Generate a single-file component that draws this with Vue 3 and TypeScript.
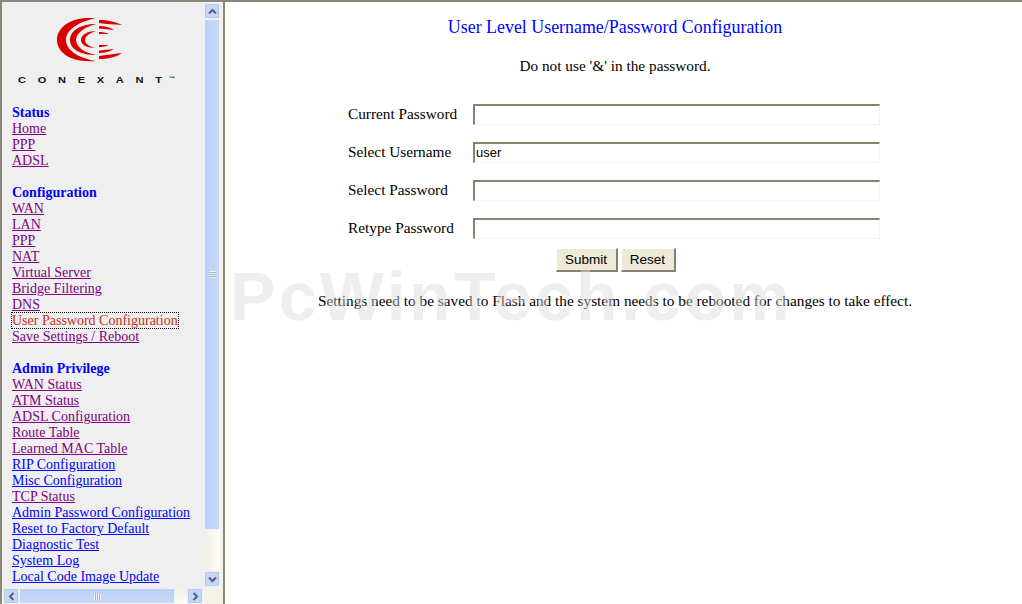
<script setup lang="ts">
// Router admin page: frameset look, nav frame on the left, form frame on the right.
interface NavLink { label: string; visited?: boolean; focus?: boolean }
interface NavGroup { title: string; links: NavLink[] }

const v = (label: string): NavLink => ({ label, visited: true })
const groups: NavGroup[] = [
  { title: 'Status', links: [v('Home'), v('PPP'), v('ADSL')] },
  {
    title: 'Configuration',
    links: [
      v('WAN'), v('LAN'), v('PPP'), v('NAT'), v('Virtual Server'), v('Bridge Filtering'), v('DNS'),
      { label: 'User Password Configuration', visited: true, focus: true },
      v('Save Settings / Reboot'),
    ],
  },
  {
    title: 'Admin Privilege',
    links: [
      v('WAN Status'), v('ATM Status'), v('ADSL Configuration'), v('Route Table'), v('Learned MAC Table'),
      { label: 'RIP Configuration' }, { label: 'Misc Configuration' }, v('TCP Status'),
      { label: 'Admin Password Configuration' }, { label: 'Reset to Factory Default' },
      { label: 'Diagnostic Test' }, { label: 'System Log' }, { label: 'Local Code Image Update' },
    ],
  },
]
const fields = [
  { label: 'Current Password', value: '' },
  { label: 'Select Username', value: 'user' },
  { label: 'Select Password', value: '' },
  { label: 'Retype Password', value: '' },
]
</script>

<template>
  <div class="frames">
    <aside class="nav-frame">
      <div class="nav-view">
        <div class="logo">
          <svg width="68" height="46" viewBox="56 18 68 46">
            <g fill="#d90000">
              <path d="M96 18 C70 16 57 28 57 40 C57 52 70 63 96 61 C78 58 66 50 66 40 C66 30 78 22 96 18Z" />
              <path d="M96 24 C80 24 70 31 70 40 C70 49 80 55 96 55 C85 53 76 47 76 40 C76 33 85 27 96 24Z" />
              <path d="M96 31 C87 31 81 35 81 40 C81 45 87 48 96 48 C90 47 85 44 85 40 C85 36 90 33 96 31Z" />
              <path d="M99 20 C108 20 116 22 122 25 C114 24.500 106 24 99 23Z" />
              <path d="M99 26 C105 26 110 27.500 114 30 C109 29.500 104 29 99 28.500Z" />
              <path d="M99 32 C102 32 106 32.500 109 34 C106 34 102 34 99 34Z" />
              <path d="M99 59 C108 59 116 57 122 53 C114 54 106 55 99 56Z" />
              <path d="M99 53 C105 53 110 51.500 114 49 C109 49.500 104 50 99 50.500Z" />
              <path d="M99 47 C102 47 106 46.500 109 45 C106 45 102 45 99 45Z" />
            </g>
          </svg>
          <div class="wordmark">CONEXANT<sup>™</sup></div>
        </div>
        <section v-for="g in groups" :key="g.title" class="group">
          <div class="group-title">{{ g.title }}</div>
          <div v-for="l in g.links" :key="l.label">
            <a href="#" :class="{ visited: l.visited, focus: l.focus }" @click.prevent>{{ l.label }}</a>
          </div>
        </section>
      </div>
      <div class="vbar">
        <div class="sb-btn"><svg width="9" height="7" viewBox="0 0 9 7"><path d="M1 5.500 4.500 2 8 5.500" /></svg></div>
        <div class="vthumb"><span class="grip-v"></span></div>
        <div class="vtrack"></div>
        <div class="sb-btn"><svg width="9" height="7" viewBox="0 0 9 7"><path d="M1 1.500 4.500 5 8 1.500" /></svg></div>
      </div>
      <div class="hbar">
        <div class="sb-btn"><svg width="7" height="9" viewBox="0 0 7 9"><path d="M5.500 1 2 4.500 5.500 8" /></svg></div>
        <div class="hthumb"><span class="grip-h"></span></div>
        <div class="htrack"></div>
        <div class="sb-btn"><svg width="7" height="9" viewBox="0 0 7 9"><path d="M1.500 1 5 4.500 1.500 8" /></svg></div>
      </div>
    </aside>

    <main class="main-frame">
      <h1 class="title">User Level Username/Password Configuration</h1>
      <p class="note">Do not use '&amp;' in the password.</p>
      <form class="form" @submit.prevent>
        <div v-for="f in fields" :key="f.label" class="row">
          <label>{{ f.label }}</label>
          <input type="text" :value="f.value" />
        </div>
        <div class="buttons">
          <button type="submit">Submit</button>
          <button type="reset">Reset</button>
        </div>
      </form>
      <p class="footnote">Settings need to be saved to Flash and the system needs to be rebooted for changes to take effect.</p>
      <div class="watermark">PcWinTech.com</div>
    </main>
  </div>
</template>

<style>
html, body { margin: 0; overflow: hidden; background: #fff; }
</style>

<style scoped>
.frames {
  display: flex; width: 1022px; height: 604px; box-sizing: border-box;
  border-top: 2px solid #8a8778;
  font: 14px/16px "Liberation Serif", serif; color: #000;
}
.nav-frame {
  position: relative; flex: none; width: 225px; box-sizing: border-box;
  border-left: 2px solid #8a8778; border-right: 2px solid #8a8778;
  display: grid; grid-template-columns: 202px 16px 3px; grid-template-rows: 585px 17px;
  background: #f4f2e6;
}
.nav-view { grid-column: 1; grid-row: 1 / 3; background: #efefef; padding: 16px 0 0 10px; overflow: hidden; }
.logo { height: 87px; display: flex; flex-direction: column; align-items: flex-start; }
.logo svg { display: block; margin-left: 44px; }
.wordmark {
  margin: 11px 0 0 6px; font: bold 8.5px/10px "Liberation Sans", sans-serif; letter-spacing: 9px; color: #111;
  white-space: nowrap; transform: scaleX(1.3); transform-origin: left center;
}
.wordmark sup { font-size: 5px; letter-spacing: 0; line-height: 0; vertical-align: 3px; margin-left: -4px; }
.group { margin-bottom: 16px; white-space: nowrap; }
.group-title { color: #0000ff; font-weight: bold; }
.group a { color: #0000ff; text-decoration: underline; }
.group a.visited { color: #800080; }
.group a.focus { color: #c8301c; outline: 1px dotted #000; text-decoration: none; }

.vbar { grid-column: 2; grid-row: 1; display: flex; flex-direction: column; padding-top: 1px; background: linear-gradient(90deg, #f0efe6, #fdfdf8); }
.hbar { grid-column: 1; grid-row: 2; display: flex; background: linear-gradient(180deg, #f0efe6, #fdfdf8); padding: 1px 1px 0; position: relative; }
.sb-btn {
  flex: none; width: 16px; height: 16px; box-sizing: border-box; display: flex; align-items: center; justify-content: center;
  background: #c6d6f6; border: 1px solid #e8eefc; border-radius: 2px; box-shadow: 0 0 0 .5px #a9bde6 inset;
}
.sb-btn svg { display: block; }
.sb-btn path { fill: none; stroke: #4d6185; stroke-width: 2; }
.vthumb {
  flex: none; height: 511px; box-sizing: border-box; display: flex; align-items: center; justify-content: center;
  background: linear-gradient(90deg, #bcd0f6, #c6d8fb); border: 1px solid #eef3fd; border-radius: 2px;
}
.vtrack { flex: 1; }
.hthumb {
  flex: none; width: 156px; box-sizing: border-box; display: flex; align-items: center; justify-content: center;
  background: linear-gradient(180deg, #bcd0f6, #c6d8fb); border: 1px solid #eef3fd; border-radius: 2px;
}
.htrack { flex: 1; }
.grip-v { width: 7px; height: 7px; background: repeating-linear-gradient(180deg, #eef3fd 0 1px, #9db3de 1px 2px); }
.grip-h { width: 7px; height: 7px; background: repeating-linear-gradient(90deg, #eef3fd 0 1px, #9db3de 1px 2px); }

.main-frame {
  position: relative; flex: 1; min-width: 0; background: #fff; overflow: hidden; padding-right: 17px;
  font-size: 15.3px; line-height: 16px; display: flex; flex-direction: column; align-items: center;
}
.watermark {
  position: absolute; left: 5px; top: 266px; font: bold 68px/56px "Liberation Sans", sans-serif;
  letter-spacing: 3.35px; color: rgba(217, 217, 217, .45); white-space: nowrap; pointer-events: none;
}
.title { margin: 15px 0 0; font: normal 17.9px/20px "Liberation Serif", serif; color: #0000ff; }
.note { margin: 21px 0 0; }
.form { margin: 21px 0 0 -2px; width: 532px; }
.row { display: flex; align-items: center; height: 38px; }
.row label { width: 125px; flex: none; }
.row input {
  width: 407px; height: 21px; box-sizing: border-box; padding: 0 1px; margin: 0;
  border-style: solid; border-width: 2px 1px 1px 2px;
  border-color: #85826f #f5f4e8 #f5f4e8 #85826f; outline: 0;
  background: #fff; font: 13px "Liberation Sans", sans-serif; color: #000;
}
.buttons { display: flex; justify-content: center; gap: 3px; margin-top: 1px; padding-left: 3px; }
.buttons button {
  height: 24px; padding: 0; box-sizing: border-box; background: #ece9d8; color: #000;
  border-style: solid; border-width: 1px 2px 2px 1px; border-color: #fff #85826f #85826f #fff;
  font: 13.5px "Liberation Sans", sans-serif;
}
.buttons button[type="submit"] { width: 62px; }
.buttons button[type="reset"] { width: 55px; }
.footnote { margin: 21px 0 0; }
</style>
